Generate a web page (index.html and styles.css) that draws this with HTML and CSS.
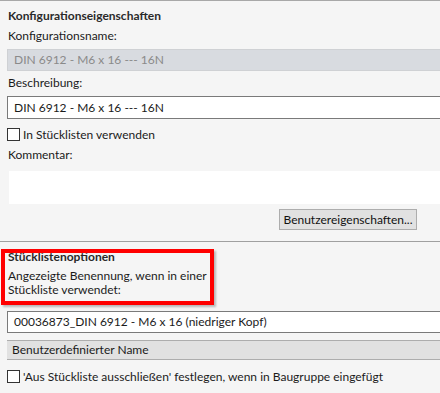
FILE: index.html
```html
<!DOCTYPE html>
<html lang="de">
<head>
    <meta charset="UTF-8">
    <title>Konfigurationseigenschaften</title>
    <link rel="stylesheet" href="styles.css">
</head>
<body>
    <div class="panel">
        <div class="top-rule"></div>

        <div class="group-title">Konfigurationseigenschaften</div>

        <div class="label">Konfigurationsname:</div>
        <div class="field disabled">DIN 6912 - M6 x 16 --- 16N</div>

        <div class="label">Beschreibung:</div>
        <div class="field desc">DIN 6912 - M6 x 16 --- 16N</div>

        <label class="check-row first">
            <span class="box"></span>
            <span>In Stücklisten verwenden</span>
        </label>

        <div class="label comment-label">Kommentar:</div>
        <div class="comment"></div>

        <div class="btn-row">
            <button class="btn">Benutzereigenschaften...</button>
        </div>

        <div class="rule"></div>

        <div class="bom-section">
            <div class="group-title bom-title">Stücklistenoptionen</div>
            <div class="label multi">Angezeigte Benennung, wenn in einer<br>Stückliste verwendet:</div>
            <!-- annotation frame drawn over the section -->
            <div class="highlight"></div>
        </div>

        <div class="field bom-name">00036873_DIN 6912 - M6 x 16 (niedriger Kopf)</div>
        <div class="band">Benutzerdefinierter Name</div>

        <label class="check-row second">
            <span class="box"></span>
            <span>'Aus Stückliste ausschließen' festlegen, wenn in Baugruppe eingefügt</span>
        </label>

        <div class="rule bottom"></div>
    </div>
</body>
</html>
```

FILE: styles.css
```css
* {
    margin: 0;
    padding: 0;
    box-sizing: border-box;
}

body {
    font-family: 'Lato', 'Noto Sans', sans-serif;
    font-size: 12px;
    color: #1b1b1b;
    background: #f5f5f5;
    width: 440px;
    height: 393px;
    overflow: hidden;
}

.panel {
    width: 440px;
}

.top-rule {
    height: 1px;
    background: #a8a8a8;
    margin-left: 0;
}

.group-title {
    font-weight: 700;
    line-height: 16px;
    margin-top: 7px;
    padding-left: 8px;
    white-space: nowrap;
    color: #2a2a2a;
}

.label {
    line-height: 16px;
    margin-top: 4px;
    padding-left: 8px;
    white-space: nowrap;
}

.field {
    margin-left: 7px;
    width: 450px;
    padding-left: 6px;
    white-space: nowrap;
    overflow: hidden;
}

.field.disabled {
    margin-top: 5px;
    height: 22px;
    line-height: 20px;
    background: #d8dbe0;
    border: 1px solid #cfd1d4;
    color: #8a8a8a;
}

.field.desc {
    margin-top: 5px;
    height: 23px;
    line-height: 21px;
    background: #fff;
    border: 1px solid #7a7a7a;
}

.check-row {
    display: flex;
    align-items: center;
    gap: 3px;
    height: 16px;
    padding-left: 7px;
    white-space: nowrap;
}

.check-row.first {
    margin-top: 7px;
}

.check-row.second {
    margin-top: 8px;
}

.box {
    width: 13px;
    height: 13px;
    border: 1px solid #333;
    background: #fff;
    flex: none;
}

.comment-label {
    margin-top: 5px;
}

.comment {
    margin-top: 8px;
    margin-left: 9px;
    height: 33px;
    background: #fff;
}

.btn-row {
    margin-top: 5px;
    padding-left: 279px;
}

.btn {
    width: 138px;
    height: 21px;
    background: #e1e1e1;
    border: 1px solid #adadad;
    font-family: inherit;
    font-size: 12px;
    color: #111;
}

.rule {
    height: 1px;
    background: #a0a0a0;
    margin-top: 11px;
}

.bom-section {
    position: relative;
    height: 57px;
}

.bom-title {
    margin-top: 7px;
}

.label.multi {
    line-height: 14px;
}

.highlight {
    position: absolute;
    left: 1px;
    top: 0;
    width: 213px;
    height: 56px;
    border: 4px solid #ff0000;
    box-shadow: 2px 2px 2px rgba(0, 0, 0, 0.25);
}

.field.bom-name {
    margin-top: 5px;
    height: 22px;
    line-height: 20px;
    background: #fff;
    border: 1px solid #7a7a7a;
}

.band {
    margin-top: 7px;
    margin-left: 7px;
    height: 20px;
    line-height: 18px;
    padding-left: 5px;
    background: #e1e1e1;
    border-top: 1px solid #adadad;
    border-bottom: 1px solid #adadad;
}

.rule.bottom {
    margin-top: 11px;
    margin-left: 3px;
}
```
